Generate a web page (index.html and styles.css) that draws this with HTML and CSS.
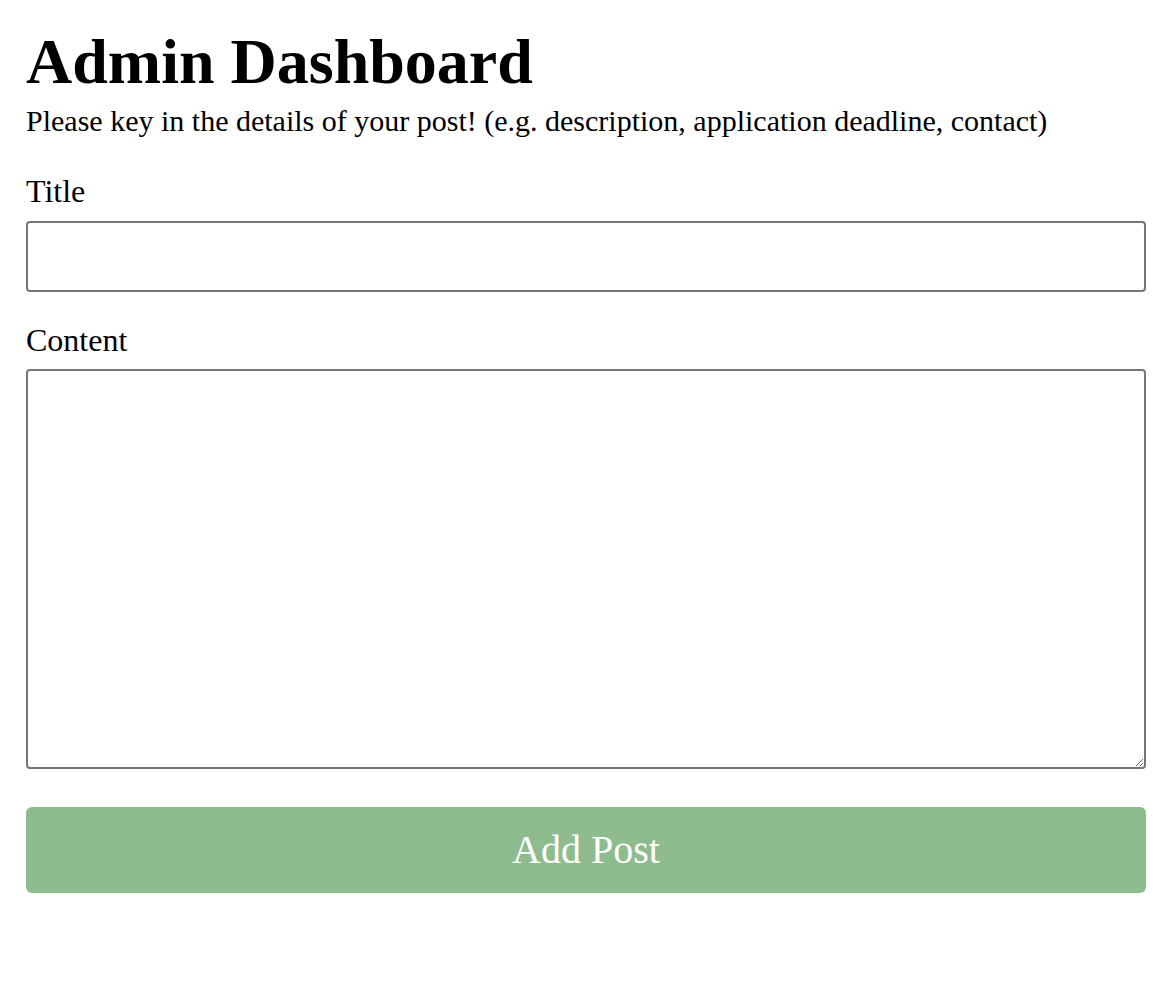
FILE: index.html
```html
<!DOCTYPE html>
<html>
<head>
<meta charset="utf-8">
<link rel="stylesheet" href="styles.css">
</head>
<body>
<main class="page">
  <h1 class="title">Admin Dashboard</h1>
  <p class="subtitle">Please key in the details of your post! (e.g. description, application deadline, contact)</p>
  <form class="form">
    <label class="label" for="title">Title</label>
    <input class="input" id="title" type="text">
    <label class="label label-content" for="content">Content</label>
    <textarea class="textarea" id="content"></textarea>
    <button class="button" type="button">Add Post</button>
  </form>
</main>
</body>
</html>
```
FILE: styles.css
```css
html, body {
  margin: 0;
  padding: 0;
  background: #fff;
}
.page {
  font-family: "Liberation Serif", "Times New Roman", serif;
  color: #000;
  padding: 25px 26px;
  display: flex;
  flex-direction: column;
}
.title {
  font-size: 64px;
  font-weight: bold;
  margin: 0;
  line-height: 1.15;
}
.subtitle {
  font-size: 30px;
  margin: 5px 0 0;
  line-height: 1.15;
}
.form {
  display: flex;
  flex-direction: column;
  margin-top: 35px;
}
.label {
  font-size: 32px;
  line-height: 1.15;
}
.label-content {
  margin-top: 30px;
}
.input, .textarea {
  box-sizing: border-box;
  width: 100%;
  border: 2px solid #767676;
  border-radius: 4px;
  font-family: inherit;
  font-size: 29px;
  background: #fff;
}
.input {
  margin: 11px 0 0;
  height: 71px;
}
.textarea {
  margin: 10px 0 0;
  height: 400px;
  resize: vertical;
}
.button {
  box-sizing: border-box;
  margin-top: 38px;
  height: 86px;
  width: 100%;
  border: none;
  border-radius: 6px;
  background: #8fbc8f;
  color: #fff;
  font-family: inherit;
  font-size: 40px;
  cursor: pointer;
}
```
